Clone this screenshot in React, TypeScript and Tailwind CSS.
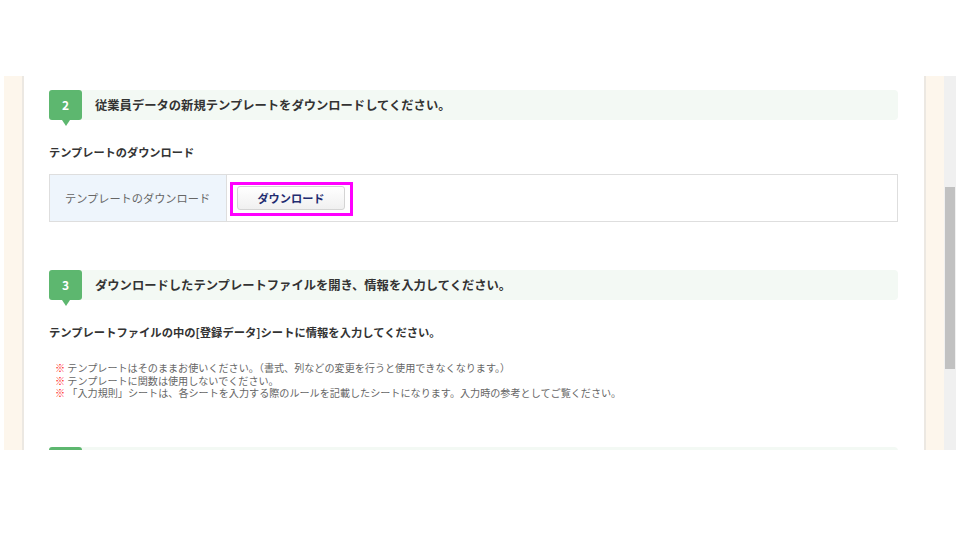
const font = { fontFamily: '"Noto Sans CJK JP", "Noto Sans", sans-serif' };

function StepHeader({ num, title }: { num: string; title: string }) {
  return (
    <div className="flex h-[30px] rounded-[4px] bg-[#f3f9f4]">
      <div className="relative flex w-[33px] shrink-0 items-center justify-center rounded-[3px] bg-[#5db76f] text-[12px] font-bold text-white">
        {num}
        <span className="absolute left-1/2 top-full -ml-[4px] h-0 w-0 border-x-[4px] border-t-[6px] border-x-transparent border-t-[#5db76f]" />
      </div>
      <div className="flex items-center pl-[13px] text-[12.3px] font-bold text-[#333]">
        {title}
      </div>
    </div>
  );
}

export default function App() {
  return (
    <div className="flex h-[540px] w-[960px] flex-col overflow-hidden bg-white" style={font}>
      <div className="h-[76px] shrink-0" />
      <div className="flex h-[374px] shrink-0 pl-[4px] pr-[4px]">
        <div className="w-[18px] shrink-0 bg-[#fdf6ec]" />
        <div className="w-[2px] shrink-0 bg-[#ece8e2]" />
        <div className="flex-1 overflow-hidden bg-white pl-[25px] pr-[26px] pt-[14px]">
          <StepHeader num="2" title="従業員データの新規テンプレートをダウンロードしてください。" />
          <div className="mt-[24px] text-[11.2px] font-bold leading-[16px] text-[#333]">
            テンプレートのダウンロード
          </div>
          <div className="mt-[14px] flex h-[48px] border border-[#dedede]">
            <div className="flex w-[177px] items-center border-r border-[#dedede] bg-[#eef5fc] pl-[15px] text-[11.2px] text-[#666]">
              テンプレートのダウンロード
            </div>
            <div className="flex items-center pl-[3px]">
              <div className="mt-[2px] border-[3px] border-[#ff00ff] pb-[3px] pl-[4px] pr-[5px] pt-[1px]">
                <button
                  type="button"
                  className="flex h-[24px] w-[108px] items-center justify-center rounded-[3px] border border-[#d4d4d4] bg-gradient-to-b from-white to-[#f0f0f0] text-[11.2px] font-bold text-[#1f2c70]"
                >
                  ダウンロード
                </button>
              </div>
            </div>
          </div>

          <div className="mt-[48px]">
            <StepHeader num="3" title="ダウンロードしたテンプレートファイルを開き、情報を入力してください。" />
          </div>
          <div className="mt-[24px] text-[11.3px] font-bold leading-[16px] text-[#333]">
            テンプレートファイルの中の[登録データ]シートに情報を入力してください。
          </div>
          <ul className="mt-[22px] pl-[6px] text-[10.1px] leading-[12.5px] text-[#666]">
            <li>
              <span className="text-[#ff1a1a]">※</span> テンプレートはそのままお使いください。（書式、列などの変更を行うと使用できなくなります。）
            </li>
            <li>
              <span className="text-[#ff1a1a]">※</span> テンプレートに関数は使用しないでください。
            </li>
            <li>
              <span className="text-[#ff1a1a]">※</span> 「入力規則」シートは、各シートを入力する際のルールを記載したシートになります。入力時の参考としてご覧ください。
            </li>
          </ul>

          <div className="mt-[47px] h-[30px] rounded-[4px] bg-[#f3f9f4]">
            <div className="h-full w-[33px] rounded-[3px] bg-[#5db76f]" />
          </div>
        </div>
        <div className="w-[2px] shrink-0 bg-[#ece8e2]" />
        <div className="w-[18px] shrink-0 bg-[#fdf6ec]" />
        <div className="relative w-[12px] shrink-0 bg-[#f0f0f0]">
          <div className="absolute left-[1px] right-[1px] top-[111px] h-[182px] bg-[#c1c1c1]" />
        </div>
      </div>
    </div>
  );
}
